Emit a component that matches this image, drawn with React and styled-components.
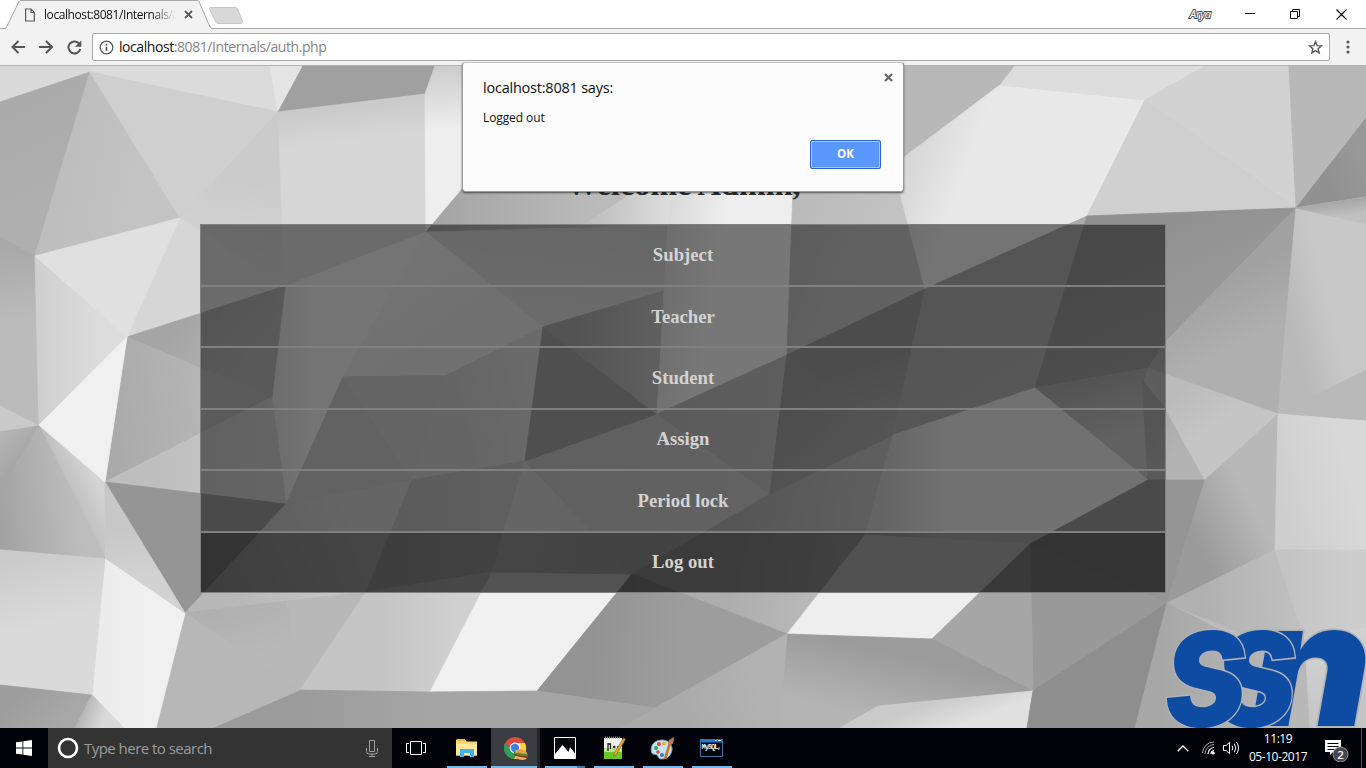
import React from 'react';
import styled, { createGlobalStyle } from 'styled-components';

const GlobalStyle = createGlobalStyle`
  * { box-sizing: border-box; }
  body { margin: 0; overflow: hidden; background: #fff; }
`;

const ui = `"Open Sans", "Noto Sans", sans-serif`;

const Screen = styled.div`
  width: 1366px;
  height: 768px;
  display: flex;
  flex-direction: column;
  position: relative;
  overflow: hidden;
  font-family: ${ui};
`;

/* ---------- browser chrome ---------- */

const TabStrip = styled.header`
  height: 29px;
  flex: none;
  display: flex;
  background: #fff;
  border-bottom: 1px solid #a9a9a9;
`;

const Tab = styled.div`
  position: relative;
  width: 206px;
  height: 29px;
  margin-left: 5px;
  display: flex;
  align-items: center;
  padding-left: 19px;
`;

const TabShape = styled.svg`
  position: absolute;
  left: 0;
  top: 0;
`;

const TabTitle = styled.span`
  position: relative;
  margin-left: 8px;
  width: 132px;
  height: 18px;
  line-height: 18px;
  overflow: hidden;
  white-space: nowrap;
  font-size: 12px;
  letter-spacing: -0.42px;
  color: #111;
  mask-image: linear-gradient(to right, #000 108px, transparent 132px);
`;

const Glyph = styled.svg`
  position: relative;
  flex: none;
  display: block;
  margin-left: ${(p) => p.$gap || 0}px;
`;

const WindowControls = styled.div`
  margin-left: auto;
  display: flex;
  align-items: center;
  height: 28px;
`;

const Profile = styled.span`
  width: 26px;
  margin-top: -2px;
  font-family: "Noto Sans", sans-serif;
  font-size: 11px;
  font-style: italic;
  letter-spacing: -0.3px;
  color: #fff;
  -webkit-text-stroke: 2px #555;
  paint-order: stroke fill;
`;

const Toolbar = styled.nav`
  height: 37px;
  flex: none;
  display: flex;
  align-items: center;
  background: #f2f2f2;
  border-bottom: 1px solid #b2b2b2;
`;

const AddressBar = styled.div`
  width: 1238px;
  height: 28px;
  margin-left: 10px;
  padding: 0 6px;
  display: flex;
  align-items: center;
  background: #fff;
  border: 1px solid #a9a9a9;
  border-radius: 2px;
`;

const Url = styled.span`
  margin-left: 5px;
  flex: 1;
  font-size: 14px;
  line-height: 20px;
  letter-spacing: -0.43px;
  color: #848484;
  b { font-weight: 400; color: #111; }
`;

/* ---------- page ---------- */

const Page = styled.main`
  position: relative;
  flex: 1;
  overflow: hidden;
  display: flex;
  flex-direction: column;
  align-items: center;
  font-family: "Liberation Serif", "Times New Roman", serif;
`;

const Facets = styled.svg`
  position: absolute;
  left: 0;
  top: 0;
`;

const Welcome = styled.h1`
  position: relative;
  margin: 100px 0 0 1px;
  height: 38px;
  line-height: 36px;
  font-size: 32px;
  letter-spacing: 0.1px;
  color: #2c2e2e;
`;

const Menu = styled.div`
  position: relative;
  width: 966px;
  margin-top: 20px;
`;

const MenuItem = styled.button`
  display: flex;
  width: 100%;
  height: 62px;
  align-items: center;
  justify-content: center;
  padding: 0;
  border: 1px solid #808080;
  background: rgba(0, 0, 0, ${(p) => (p.$hovered ? 0.66 : 0.5)});
  background-clip: padding-box;
  color: #d3d3d3;
  font: bold 18.72px/22px "Liberation Serif", "Times New Roman", serif;
  &:nth-child(even) { height: 61px; }
  &:nth-child(4), &:nth-child(6) { padding-bottom: 2px; }
`;

const Logo = styled.svg`
  position: absolute;
  right: 0;
  bottom: 0;
  paint-order: stroke;
`;

/* ---------- alert ---------- */

const Alert = styled.section`
  position: absolute;
  left: 462px;
  top: 62px;
  width: 442px;
  height: 130px;
  padding: 15px 23px 22px 20px;
  display: flex;
  flex-direction: column;
  background: #fcfcfc;
  border: 1px solid #9b9b9b;
  border-top-color: #c2c2c2;
  border-radius: 3px;
  box-shadow: 0 1px 2px rgba(0, 0, 0, 0.55);
  background-clip: padding-box;
`;

const AlertTitle = styled.div`
  font-size: 14.5px;
  line-height: 20px;
  letter-spacing: -0.22px;
  color: #111;
`;

const AlertText = styled.div`
  margin-top: 12px;
  font-size: 12px;
  line-height: 16px;
  letter-spacing: -0.1px;
  color: #111;
`;

const OkButton = styled.button`
  align-self: flex-end;
  width: 71px;
  height: 29px;
  margin: 14px -1px 0 0;
  padding: 0 0 2px;
  border: 1px solid #2c65c8;
  border-radius: 2px;
  box-shadow: inset 0 0 0 1px #a9c8ff;
  background: #5a97ff;
  color: #fff;
  font: bold 11.5px ${ui};
`;

const AlertClose = styled.svg`
  position: absolute;
  right: 10px;
  top: 10px;
`;

/* ---------- taskbar ---------- */

const Taskbar = styled.footer`
  height: 40px;
  flex: none;
  display: flex;
  background: #010309;
`;

const StartButton = styled.div`
  width: 48px;
  display: grid;
  place-items: center;
`;

const SearchBox = styled.div`
  width: 344px;
  display: flex;
  align-items: center;
  padding: 0 14px 0 9px;
  background: #333;
  color: #9c9c9c;
  font-size: 15px;
  letter-spacing: -0.53px;
  span { flex: 1; margin-left: 5px; line-height: 20px; padding-bottom: 1px; }
`;

const TaskView = styled.div`
  width: 50px;
  display: grid;
  place-items: center;
  padding-right: 2px;
`;

const TaskButton = styled.div`
  width: 49px;
  display: flex;
  flex-direction: column;
  align-items: center;
  background: ${(p) => (p.$active ? '#393c40' : 'transparent')};
  border-right: ${(p) => (p.$active ? '3px solid #24272a' : '0')};
  svg { display: block; margin-top: 8px; margin-left: ${(p) => (p.$active ? '4px' : '0')}; flex: none; }
`;

const Running = styled.i`
  width: ${(p) => p.$width || 40}px;
  height: 2px;
  margin-top: auto;
  background: ${(p) => (p.$stacked ? 'linear-gradient(to right, #76b9ed 32px, #4a7ba3 32px)' : '#76b9ed')};
`;

const Tray = styled.div`
  margin-left: auto;
  width: 190px;
  display: flex;
  align-items: center;
`;

const Clock = styled.div`
  width: 72px;
  margin-left: 2px;
  text-align: center;
  color: #fff;
  font-size: 12px;
  line-height: 18px;
  letter-spacing: -0.45px;
  padding-bottom: 1px;
`;

const ShowDesktop = styled.i`
  width: 1px;
  height: 40px;
  margin-left: 12px;
  background: #51545a;
`;

/* Each facet: points, fill, then optionally a second fill and the gradient axis. */
const facets = [
  ['0,66 92,66 90,72 0,102', '#d9d9d9'],
  ['92,66 270,66 278,112 90,72', '#dbdbdb'],
  ['270,66 303,66 278,112', '#e4e4e4'],
  ['303,66 435,66 425,94 278,112', '#a0a0a0'],
  ['0,102 90,72 35,256 0,237', '#a9a9a9', '#afafaf', 0, 66, 60, 200],
  ['90,72 180,218 35,256', '#bdbdbd', '#c4c4c4', 50, 180, 150, 200],
  ['90,72 278,112 180,218', '#cfcfcf'],
  ['278,112 283,225 285,286 180,218', '#cbcbcb', '#d6d6d6', 240, 180, 230, 270],
  ['180,218 285,286 127,337', '#d6d6d6'],
  ['278,112 425,94 426,232 285,286', '#c8c8c8', '#d6d6d6', 350, 100, 355, 140],
  ['435,66 520,66 520,192 463,188 426,232 425,94', '#cccccc', '#eeeeee', 440, 66, 445, 130],
  ['463,188 660,188 583,227 426,232', '#a5a5a5', '#bbbbbb', 440, 200, 600, 200],
  ['640,188 670,188 670,289 543,327 426,232 580,228', '#cdcdcd', '#d6d6d6', 560, 225, 550, 300],
  ['640,188 670,188 670,225 580,228', '#bcbcbc', '#dddddd', 590, 200, 670, 210],
  ['285,286 426,232 343,377 286,504 272,397', '#dadada', '#e9e9e9', 275, 350, 315, 350],
  ['426,232 543,327 445,376 343,377', '#e6e6e6', '#e0e0e0', 400, 260, 460, 340],
  ['343,377 445,376 412,480 286,504', '#c4c4c4'],
  ['343,377 445,376 412,480', '#c9c9c9'],
  ['445,376 543,327 525,461 412,480', '#cacaca', '#d4d4d4', 450, 400, 530, 380],
  ['127,337 285,286 272,397 200,368', '#a5a5a5', '#b3b3b3', 200, 300, 260, 350],
  ['127,337 200,368 272,397 105,482', '#aaaaaa', '#b5b5b5', 110, 400, 200, 390],
  ['105,482 272,397 286,504', '#bebebe', '#c8c8c8', 150, 460, 270, 460],
  ['105,482 286,504 185,613', '#959595'],
  ['286,504 412,480 366,592 185,613', '#b7b7b7', '#cacaca', 220, 580, 350, 520],
  ['412,480 525,461 492,572 366,592', '#b7b7b7', '#bfbfbf', 400, 520, 500, 520],
  ['185,613 287,601 300,690', '#b0b0b0', '#b8b8b8', 230, 605, 250, 660],
  ['287,601 366,592 300,690', '#b8b8b8'],
  ['366,592 492,572 430,692 300,690', '#c5c5c5', '#d0d0d0', 380, 630, 460, 630],
  ['492,572 632,574 537,691 430,692', '#f0f0f0'],
  ['525,461 632,574 492,572', '#cccccc', '#c4c4c4', 500, 520, 600, 540],
  ['525,461 657,414 770,494 632,574', '#bfbfbf', '#c4c4c4', 540, 480, 740, 500],
  ['543,327 657,414 525,461', '#9e9e9e'],
  ['543,327 670,289 657,414', '#a6a6a6', '#c0c0c0', 570, 350, 665, 350],
  ['670,188 793,190 793,225 787,355 657,414', '#dadada', '#eeeeee', 665, 240, 720, 250],
  ['787,355 770,494 657,414', '#b7b7b7', '#bcbcbc', 680, 400, 780, 420],
  ['793,188 901,188 901,197 925,289 787,355', '#bababa', '#c2c2c2', 800, 200, 880, 230],
  ['787,355 925,289 893,435 865,535 770,494', '#999999', '#b8b8b8', 820, 380, 860, 500],
  ['770,494 893,435 865,535 787,634 632,574', '#adadad', '#bcbcbc', 740, 520, 850, 540],
  ['787,355 893,435 770,494', '#9b9b9b', '#a8a8a8', 800, 400, 850, 460],
  ['903,66 1015,66 1000,85 903,160', '#b8b8b8'],
  ['1000,85 1145,100 1087,216 925,289 901,197 903,158', '#d6d6d6', '#e8e8e8', 910, 150, 965, 170],
  ['1015,66 1205,66 1145,100 1000,85', '#dddddd'],
  ['1205,66 1289,66 1296,208 1145,100', '#d2d2d2'],
  ['1145,100 1296,208 1087,216', '#cfcfcf'],
  ['1289,66 1366,66 1366,118 1296,208', '#b8b8b8'],
  ['1296,208 1366,118 1366,197', '#919191', '#989898', 1320, 170, 1360, 150],
  ['1087,216 925,289 893,435 1035,388', '#a9a9a9', '#aeaeae', 960, 270, 1020, 380],
  ['1087,216 1296,208 1167,340 1148,368 1035,388', '#909090', '#9a9a9a', 1100, 240, 1150, 350],
  ['1296,208 1278,414 1165,378 1148,368 1167,340', '#a1a1a1', '#afafaf', 1200, 290, 1230, 350],
  ['1296,208 1366,197 1366,370 1278,414', '#b9b9b9', '#c8c8c8', 1290, 320, 1330, 310],
  ['1296,208 1366,197 1366,224', '#a6a6a6', '#c0c0c0', 1330, 202, 1332, 218],
  ['1278,414 1366,370 1366,421', '#b9b9b9'],
  ['1035,388 1148,368 1142,385 1148,480', '#a9a9a9', '#c2c2c2', 1090, 380, 1110, 440],
  ['1142,380 1165,408 1205,480 1148,480', '#a8a8a8', '#b3b3b3', 1150, 420, 1180, 450],
  ['1148,368 1278,414 1205,480 1165,408', '#bbbbbb', '#c5c5c5', 1180, 390, 1210, 430],
  ['893,435 1035,388 1148,480 1030,544 865,535', '#c8c8c8', '#e2e2e2', 880, 480, 945, 480],
  ['865,535 1030,544 932,639 787,634', '#eeeeee'],
  ['1030,544 1148,480 1205,480 1167,603', '#959595'],
  ['1205,480 1278,414 1275,550 1167,603', '#9a9a9a', '#b8b8b8', 1190, 530, 1250, 500],
  ['1278,414 1366,421 1366,550 1275,550', '#cecece', '#d8d8d8', 1280, 500, 1350, 480],
  ['1030,544 1167,603 1033,691', '#999999'],
  ['1030,544 1033,691 932,639', '#a6a6a6'],
  ['632,574 787,634 655,708 537,691', '#939393', '#9d9d9d', 590, 650, 680, 660],
  ['787,634 932,639 1033,691 878,706 840,728 779,728', '#9b9b9b', '#b4b4b4', 880, 650, 865, 715],
  ['1033,691 1027,728 840,728 878,706', '#cacaca', '#e0e0e0', 940, 700, 950, 728],
  ['787,634 779,728 620,728 655,708', '#aaaaaa', '#b2b2b2', 680, 710, 760, 690],
  ['300,690 430,692 537,691 655,708 620,728 212,728', '#9b9b9b', '#a5a5a5', 300, 710, 430, 710],
  ['185,613 300,690 212,728 156,728', '#b7b7b7'],
  ['105,558 185,613 156,728 124,728 92,695', '#ebebeb', '#f0f0f0', 100, 640, 150, 640],
  ['0,549 105,558 92,695 0,685', '#cacaca', '#dadada', 40, 550, 60, 620],
  ['0,685 92,695 75,728 0,728', '#9d9d9d', '#a8a8a8', 20, 690, 60, 728],
  ['92,695 124,728 75,728', '#b5b5b5', '#dadada', 82, 710, 105, 718],
  ['39,425 105,482 105,558', '#bcbcbc', '#d5d5d5', 65, 490, 95, 475],
  ['105,482 185,613 105,558', '#c7c7c7', '#d2d2d2', 120, 530, 130, 580],
  ['39,425 105,558 0,549 0,490', '#a2a2a2', '#bdbdbd', 0, 530, 80, 520],
  ['0,431 39,425 0,490', '#b4b4b4', '#a6a6a6', 0, 440, 20, 460],
  ['0,405 39,425 0,431', '#c9c9c9'],
  ['0,237 35,256 39,425 0,405', '#a9a9a9', '#bbbbbb', 10, 250, 15, 320],
  ['35,256 127,337 39,425', '#cecece', '#dcdcdc', 35, 340, 100, 340],
  ['35,256 180,218 127,337', '#e0e0e0'],
  ['39,425 127,337 105,482', '#f0f0f0'],
  ['1167,603 1033,691 1027,728 1135,728', '#8e8e8e'],
  ['1167,603 1275,550 1305,640 1260,640', '#b0b0b0', '#bfbfbf', 1200, 600, 1290, 590],
  ['1167,603 1135,728 1330,728 1305,640 1240,640', '#a7a7a7', '#b8b8b8', 1160, 680, 1290, 680],
  ['1275,550 1366,550 1366,630 1305,640', '#c4c4c4', '#cdcdcd', 1290, 600, 1350, 600],
  ['1305,640 1366,628 1366,728 1310,728', '#d0d0d0', '#c5c5c5', 1320, 650, 1350, 710],
];

const Background = () => (
  <Facets width="1366" height="662" viewBox="0 66 1366 662">
    <defs>
      {facets.map((f, i) => f[2] && (
        <linearGradient key={i} id={`facet${i}`} gradientUnits="userSpaceOnUse" x1={f[3]} y1={f[4]} x2={f[5]} y2={f[6]}>
          <stop offset="0" stopColor={f[1]} />
          <stop offset="1" stopColor={f[2]} />
        </linearGradient>
      ))}
      <filter id="soften" x="0" y="0" width="1" height="1">
        <feGaussianBlur stdDeviation="0.7" />
      </filter>
    </defs>
    <rect y="66" width="1366" height="662" fill="#bcbcbc" />
    <g filter="url(#soften)">
      {facets.map((f, i) => {
        const paint = f[2] ? `url(#facet${i})` : f[1];
        return <polygon key={i} points={f[0]} fill={paint} stroke={paint} strokeWidth="0.8" />;
      })}
    </g>
  </Facets>
);

const SsnLogo = () => (
  <Logo width="204" height="104" viewBox="1162 624 204 104" fontFamily="Inter, sans-serif" fontWeight="900" fontStyle="italic" fontSize="174" fill="#0d4ca2" stroke="#b0b2b5" strokeWidth="3">
    <text transform="translate(1251 725.500) scale(1.07 1)">n</text>
    <text transform="translate(1215 725.500) scale(.84 1)" fontWeight="800">s</text>
    <text transform="translate(1165 725.500) scale(.84 1)" fontWeight="800">s</text>
  </Logo>
);

const Explorer = () => (
  <svg width="22" height="24" viewBox="0 0 22 24">
    <path d="M0 3.500h9l1.500 2H21v14H0z" fill="#f8d775" />
    <path d="M1 3h8v2H1z" fill="#e9b93b" />
    <path d="M0 8h21v11.500H0z" fill="#ffe79b" />
    <path d="M4 13h14v8h-4v-4H8v4H4z" fill="#3fb3ea" />
  </svg>
);

const ChromeIcon = () => (
  <svg width="24" height="25" viewBox="0 0 24 25">
    <circle cx="11" cy="12" r="11" fill="#dd4b3e" />
    <path d="M1.300 6.800A11 11 0 0 0 10 23l4-8-7.500-.5z" fill="#22a35a" />
    <path d="M11 7h9.900A11 11 0 0 1 10 23l5.500-9z" fill="#ffcd42" />
    <circle cx="11" cy="12" r="5.400" fill="#fff" />
    <circle cx="11" cy="12" r="4.200" fill="#3e7fe8" />
    <path d="M10.500 16c1-4.500 12-3.500 13 2.500z" fill="#e3a04a" />
    <path d="M10 16l14 2.500-.5 2L10 18z" fill="#5d8b2b" />
    <path d="M10 18l14 2.500-1 2L10.500 20z" fill="#8a3420" />
    <path d="M11 20l12 2c-1 3-11 2.500-12-2z" fill="#e4b06a" />
  </svg>
);

const Photos = () => (
  <svg width="22" height="24" viewBox="0 0 22 24">
    <path d="M.5 1.500h21v21H.5z" fill="#05070c" stroke="#fff" />
    <path d="M1 18l7.500-9 6 7 1.500-5 5.500 7v4.500H1z" fill="#fff" />
  </svg>
);

const Notepad = () => (
  <svg width="24" height="25" viewBox="0 0 24 25">
    <path d="M2 2h18v21H2z" fill="#f4f6ee" />
    <path d="M2 14h18v9H2z" fill="#69c928" />
    <path d="M2 12h18v4H2z" fill="#b6e58c" />
    <path d="M3 1.500h16" stroke="#888" strokeDasharray="1 1" strokeWidth="2" />
    <path d="M6 7v8M6 8h2.500v5M11 11h2.500M12.200 9.800v2.500M15 11h2" stroke="#222" strokeWidth="1.300" fill="none" />
    <path d="M21.500 2l2 1.500L14 19l-2.500 1.500.5-3z" fill="#e9a532" stroke="#88551d" strokeWidth=".6" />
  </svg>
);

const Paint = () => (
  <svg width="25" height="25" viewBox="0 0 25 25">
    <path d="M12 4C4 4 0 10 1.500 16c.5 3 4 2 5.500 3 1.500 1.500 1 4 5 4 6 0 10-5 10-10S18 4 12 4z" fill="#c7e2ef" stroke="#6e9fb8" />
    <circle cx="6" cy="12" r="2" fill="#3d9a54" /><circle cx="9" cy="8" r="2" fill="#dc4c3a" />
    <circle cx="14" cy="7.500" r="1.800" fill="#e8a92d" /><circle cx="8" cy="16" r="1.800" fill="#dc4c3a" />
    <circle cx="12" cy="19" r="2" fill="#3975c5" />
    <path d="M20 7l-5 16" stroke="#c5762b" strokeWidth="2.600" />
    <path d="M18 8c0-4 2-5 6-7-.5 4 0 7-3.500 8z" fill="#b77e51" />
  </svg>
);

const MySql = () => (
  <svg width="23" height="24" viewBox="0 0 23 24">
    <path d="M.5 3.500h22v17H.5z" fill="#05070b" stroke="#4472a4" />
    <path d="M0 3h23v3.500H0z" fill="#1f78d1" />
    <path d="M15 4.500h1.500M18 4.500h3" stroke="#fff" />
    <text x="1.500" y="13" fontSize="7" fontWeight="700" fontFamily="Liberation Mono, monospace" textLength="20" fill="#f2f2f2">MySQL,</text>
  </svg>
);

const menuItems = ['Subject', 'Teacher', 'Student', 'Assign', 'Period lock', 'Log out'];

export default function App() {
  return (
    <Screen>
      <GlobalStyle />
      <TabStrip>
        <Tab>
          <TabShape width="240" height="29" viewBox="0 0 240 29">
            <path d="M0 29L1 28 14 1.500Q14.500.5 16 .5H192Q193.500.5 194 1.500L206 28 207 29z" fill="#f2f2f2" />
            <path d="M0 28.500Q1 28.500 1.500 27L14 1.500Q14.500.5 16 .5H192Q193.500.5 194 1.500L205 27Q205.500 28.500 207 28.500" fill="none" stroke="#a9a9a9" />
            <path d="M205.500 7.500h25q1.500 0 2 1l5 13q.5 2-1.500 2H213q-1.500 0-2-1L204.500 9q0-1.500 1-1.500z" fill="#d8d8d8" stroke="#c8c8c8" />
          </TabShape>
          <Glyph width="12" height="14" viewBox="0 0 12 14" fill="none" stroke="#5a5a5a" strokeWidth="1.200">
            <path d="M1.600 1h5.400L10.400 4.400V13H1.600zM7 1v3.500h3.400" />
          </Glyph>
          <TabTitle>localhost:8081/Internals/auth.php</TabTitle>
          <Glyph width="9" height="9" viewBox="0 0 9 9" stroke="#5a5a5a" strokeWidth="1.800" $gap={8}>
            <path d="M1 1l7 7M8 1l-7 7" />
          </Glyph>
        </Tab>
        <WindowControls>
          <Profile>Arya</Profile>
          <Glyph width="11" height="12" viewBox="0 0 11 12" $gap={29} stroke="#000"><path d="M0 5.500h10" /></Glyph>
          <Glyph width="11" height="11" viewBox="0 0 11 11" $gap={34} fill="none" stroke="#000">
            <path d="M.5 2.500h7v7h-7zM2.500 2V.5h7v7H8" />
          </Glyph>
          <Glyph width="11" height="11" viewBox="0 0 11 11" $gap={35} stroke="#000" strokeWidth="1.100"><path d="M.5.5l10 10M10.500.5l-10 10" /></Glyph>
          <Glyph width="19" height="1" />
        </WindowControls>
      </TabStrip>

      <Toolbar>
        <Glyph width="15" height="14" viewBox="0 0 15 14" $gap={11} fill="none" stroke="#555" strokeWidth="2"><path d="M14 7H2M7.500 1L1.500 7l6 6" /></Glyph>
        <Glyph width="15" height="14" viewBox="0 0 15 14" $gap={13} fill="none" stroke="#555" strokeWidth="2"><path d="M0 7h13M7 1l6 6-6 6" /></Glyph>
        <Glyph width="15" height="15" viewBox="0 0 15 15" $gap={13} fill="none" stroke="#555" strokeWidth="2">
          <path d="M12.600 4.300A6 6 0 1 0 13.300 9" /><path d="M14.300.5v6.300H8z" fill="#555" stroke="none" />
        </Glyph>
        <AddressBar>
          <Glyph width="15" height="15" viewBox="0 0 15 15" fill="none" stroke="#5a5a5a">
            <circle cx="7.500" cy="7.500" r="6.300" strokeWidth="1.300" /><path d="M7.500 6.700V11M7.500 3.800v1.700" strokeWidth="1.700" />
          </Glyph>
          <Url><b>localhost</b>:8081/Internals/auth.php</Url>
          <Glyph width="15" height="15" viewBox="0 0 15 15" fill="none" stroke="#5a5a5a" strokeWidth="1.400">
            <path d="M7.500 1.600l1.600 4 4.400.3-3.400 2.800 1.100 4.200-3.700-2.300-3.700 2.300 1.100-4.200L1.500 5.900l4.400-.3z" />
          </Glyph>
        </AddressBar>
        <Glyph width="4" height="14" viewBox="0 0 4 14" fill="#5a5a5a" $gap={16}>
          <circle cx="2" cy="2" r="1.600" /><circle cx="2" cy="7" r="1.600" /><circle cx="2" cy="12" r="1.600" />
        </Glyph>
      </Toolbar>

      <Page>
        <Background />
        <Welcome>Welcome Admin,</Welcome>
        <Menu>
          {menuItems.map((label) => (
            <MenuItem key={label} $hovered={label === 'Log out'}>{label}</MenuItem>
          ))}
        </Menu>
        <SsnLogo />
      </Page>

      <Taskbar>
        <StartButton>
          <svg width="16" height="16" viewBox="0 0 16 16" fill="#fff">
            <path d="M0 2.300L6.500 1.400V7.500H0zM7.300 1.300L16 0v7.500H7.300zM0 8.400h6.500v6.200L0 13.700zM7.300 8.400H16V16l-8.700-1.200z" />
          </svg>
        </StartButton>
        <SearchBox>
          <Glyph width="22" height="22" viewBox="0 0 22 22"><circle cx="11" cy="11" r="9" fill="none" stroke="#fff" strokeWidth="2.600" /></Glyph>
          <span>Type here to search</span>
          <Glyph width="12" height="17" viewBox="0 0 12 17" fill="none" stroke="#a0a0a0">
            <path d="M3.500.5h5v11h-5zM.5 8v3.500q0 2.500 2.500 2.500h6q2.500 0 2.500-2.500V8M6 14v2.500M3 16.500h6" />
          </Glyph>
        </SearchBox>
        <TaskView>
          <svg width="20" height="14" viewBox="0 0 20 14" fill="none" stroke="#fff">
            <path d="M4.500.5h11v13h-11zM3 2.500H.5v9H3M17 2.500h2.500v9H17" />
          </svg>
        </TaskView>
        <TaskButton><Explorer /><Running /></TaskButton>
        <TaskButton $active><ChromeIcon /><Running $width={46} /></TaskButton>
        <TaskButton><Photos /><Running $stacked /></TaskButton>
        <TaskButton><Notepad /><Running /></TaskButton>
        <TaskButton><Paint /><Running /></TaskButton>
        <TaskButton><MySql /><Running /></TaskButton>
        <Tray>
          <Glyph width="12" height="7" viewBox="0 0 12 7" fill="none" stroke="#fff" strokeWidth="1.300" $gap={1}><path d="M.7 6.300L6 1l5.300 5.300" /></Glyph>
          <Glyph width="13" height="14" viewBox="0 0 13 14" fill="none" stroke="#fff" $gap={13}>
            <path d="M9 13a3.500 3.500 0 0 1 3-3.500M6 13a6.500 6.500 0 0 1 6-6.500" strokeWidth="1.200" />
            <path d="M3 13a9.500 9.500 0 0 1 9-9.500M.5 12A11.500 11.500 0 0 1 12 1" stroke="#aaa" />
            <circle cx="11.300" cy="12" r="1.500" fill="#fff" stroke="none" />
          </Glyph>
          <Glyph width="17" height="14" viewBox="0 0 17 14" fill="none" stroke="#fff" $gap={8}>
            <path d="M.5 4.500h2.700L6.500 1.300v11.400L3.200 9.500H.5zM9 4.500q1.700 2.500 0 5M11.300 2.700q3 4.300 0 8.600M13.500 1q4 6 0 12" />
          </Glyph>
          <Clock>11:19<br />05-10-2017</Clock>
          <Glyph width="24" height="28" viewBox="0 0 24 28" $gap={11}>
            <path d="M0 6h16v12H8l-3 3v-3H0z" fill="#fff" />
            <path d="M2.500 9.500h11M2.500 12.500h11M2.500 15.500h7" stroke="#010309" />
            <circle cx="15.500" cy="20.500" r="7.500" fill="#45484d" stroke="#909399" />
            <text x="15.500" y="24.700" textAnchor="middle" fontSize="11.500" fontWeight="600" fill="#fff">2</text>
          </Glyph>
          <ShowDesktop />
        </Tray>
      </Taskbar>

      <Alert>
        <AlertTitle>localhost:8081 says:</AlertTitle>
        <AlertText>Logged out</AlertText>
        <OkButton>OK</OkButton>
        <AlertClose width="9" height="9" viewBox="0 0 9 9" stroke="#666" strokeWidth="2.200"><path d="M1 1l7 7M8 1l-7 7" /></AlertClose>
      </Alert>
    </Screen>
  );
}
